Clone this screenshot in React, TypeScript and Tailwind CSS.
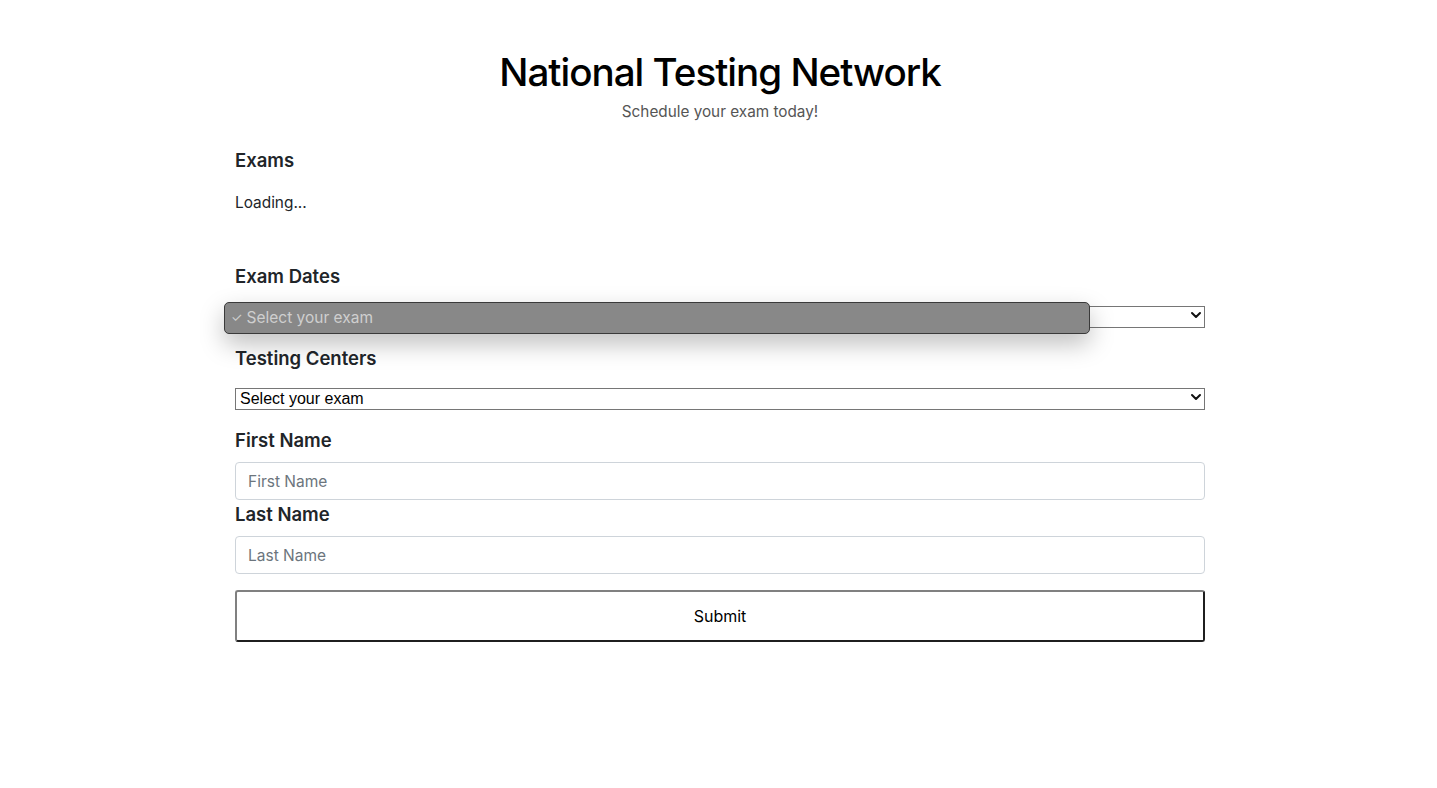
import React from "react";

const sans = { fontFamily: "Inter, 'Noto Sans', sans-serif" };

function Chevron() {
  return (
    <svg
      className="pointer-events-none absolute right-[3px] top-1/2 -translate-y-1/2"
      width="12"
      height="8"
      viewBox="0 0 12 8"
      fill="none"
    >
      <path d="M2 2l4 4 4-4" stroke="#111" strokeWidth="2" strokeLinecap="round" strokeLinejoin="round" />
    </svg>
  );
}

function NativeSelect({ value }: { value: string }) {
  return (
    <div className="relative h-[22px] w-full">
      <select
        defaultValue={value}
        className="h-[22px] w-full appearance-none rounded-none border border-[#767676] bg-white pl-[4px] text-[16px] leading-[20px] text-black outline-none"
        style={{ fontFamily: "'Liberation Sans', Arial, sans-serif" }}
      >
        <option>{value}</option>
      </select>
      <Chevron />
    </div>
  );
}

function SectionLabel({ children }: { children: React.ReactNode }) {
  return <h2 className="text-[18.5px] font-semibold leading-[24px] text-[#212529]">{children}</h2>;
}

function TextInput({ placeholder }: { placeholder: string }) {
  return (
    <input
      type="text"
      placeholder={placeholder}
      className="h-[38px] w-full rounded-[4px] border border-[#ced4da] bg-white px-3 text-[15.5px] text-[#212529] outline-none placeholder:text-[#6c757d]"
      style={sans}
    />
  );
}

export default function App() {
  return (
    <div className="min-h-screen bg-white" style={sans}>
      <div className="ml-[235px] flex w-[970px] flex-col">
        <div className="flex flex-col items-center pt-[48px]">
          <h1 className="text-[38.6px] font-medium leading-[48px] tracking-[-1px] text-black">
            National Testing Network
          </h1>
          <p className="mt-[6px] text-[15.3px] leading-[20px] text-[#555]">Schedule your exam today!</p>
        </div>

        <div className="mt-[26px]">
          <SectionLabel>Exams</SectionLabel>
          <p className="mt-[21px] text-[15.4px] leading-[20px] text-[#212529]">Loading...</p>
        </div>

        <div className="mt-[51px]">
          <SectionLabel>Exam Dates</SectionLabel>
          <div className="relative mt-[16px]">
            <NativeSelect value="" />
            {/* open native popup */}
            <div className="absolute left-[-11px] top-[-2px] flex h-[32px] w-[866px] items-center rounded-[5px] border border-[#3a3a3a] bg-[#888888] pl-[6px] shadow-[0_10px_24px_rgba(0,0,0,0.25)]">
              <span className="text-[13px] text-[#cfcfcf]">✓</span>
              <span className="ml-[4px] text-[15.5px] text-[#cfcfcf]">Select your exam</span>
            </div>
          </div>
        </div>

        <div className="mt-[20px]">
          <SectionLabel>Testing Centers</SectionLabel>
          <div className="mt-[16px]">
            <NativeSelect value="Select your exam" />
          </div>
        </div>

        <div className="mt-[20px]">
          <SectionLabel>First Name</SectionLabel>
          <div className="mt-[10px]">
            <TextInput placeholder="First Name" />
          </div>
        </div>

        <div className="mt-[2px]">
          <SectionLabel>Last Name</SectionLabel>
          <div className="mt-[10px]">
            <TextInput placeholder="Last Name" />
          </div>
        </div>

        <button
          type="button"
          className="mt-[16px] h-[52px] w-full rounded-[3px] border-2 border-l-[#808080] border-t-[#808080] border-b-[#1f1f1f] border-r-[#1f1f1f] bg-white text-[16px] text-black"
        >
          Submit
        </button>
      </div>
    </div>
  );
}
